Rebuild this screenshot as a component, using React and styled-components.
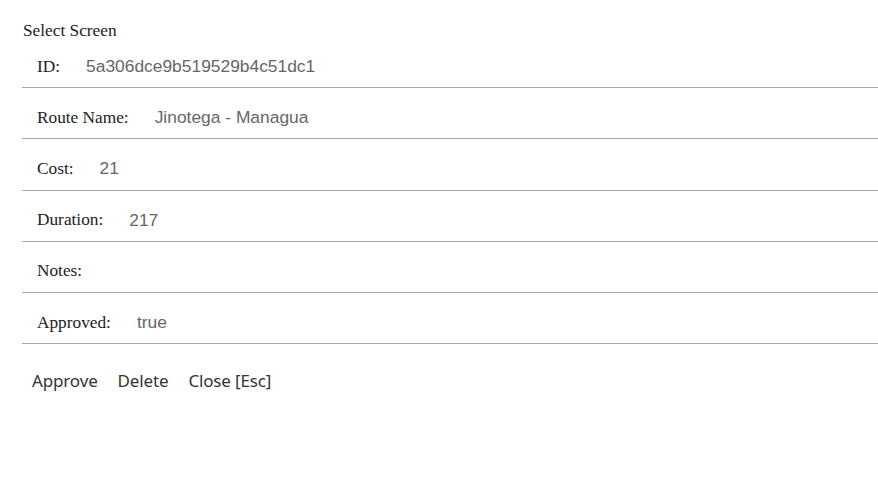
import React from "react";
import styled, { createGlobalStyle } from "styled-components";

const Global = createGlobalStyle`
  html, body { margin: 0; padding: 0; background: #fff; }
  body { font-family: "Liberation Serif", "Times New Roman", serif; }
`;

const Screen = styled.div`
  padding: 24px 0 0 22px;
`;

const Title = styled.div`
  font-size: 17.3px;
  line-height: 14px;
  margin-bottom: -1px;
  color: #222;
  padding-left: 1px;
`;

const List = styled.div`
  display: flex;
  flex-direction: column;
`;

const Row = styled.div`
  display: flex;
  align-items: center;
  height: 51.2px;
  padding: 9px 0 0 15px;
  box-sizing: border-box;
  border-bottom: 1px solid #aaa8a6;
  gap: 26px;
`;

const Label = styled.span`
  font-family: "Liberation Serif", "Times New Roman", serif;
  font-size: 17.3px;
  color: #222;
`;

const Value = styled.span`
  font-family: "Liberation Sans", Arial, sans-serif;
  font-size: 17.4px;
  color: #666;
`;

const Actions = styled.div`
  display: flex;
  gap: 20px;
  padding: 25px 0 0 10px;
`;

const Action = styled.button`
  border: none;
  background: none;
  padding: 0;
  font-family: "Noto Sans", "Open Sans", sans-serif;
  font-size: 17px;
  letter-spacing: -0.15px;
  color: #333;
  cursor: pointer;
`;

const rows = [
  { label: "ID:", value: "5a306dce9b519529b4c51dc1" },
  { label: "Route Name:", value: "Jinotega - Managua" },
  { label: "Cost:", value: "21" },
  { label: "Duration:", value: "217" },
  { label: "Notes:", value: "" },
  { label: "Approved:", value: "true" },
];

export default function App() {
  return (
    <>
      <Global />
      <Screen>
        <Title>Select Screen</Title>
        <List>
          {rows.map((r) => (
            <Row key={r.label}>
              <Label>{r.label}</Label>
              {r.value && <Value>{r.value}</Value>}
            </Row>
          ))}
        </List>
        <Actions>
          <Action>Approve</Action>
          <Action>Delete</Action>
          <Action>Close [Esc]</Action>
        </Actions>
      </Screen>
    </>
  );
}
